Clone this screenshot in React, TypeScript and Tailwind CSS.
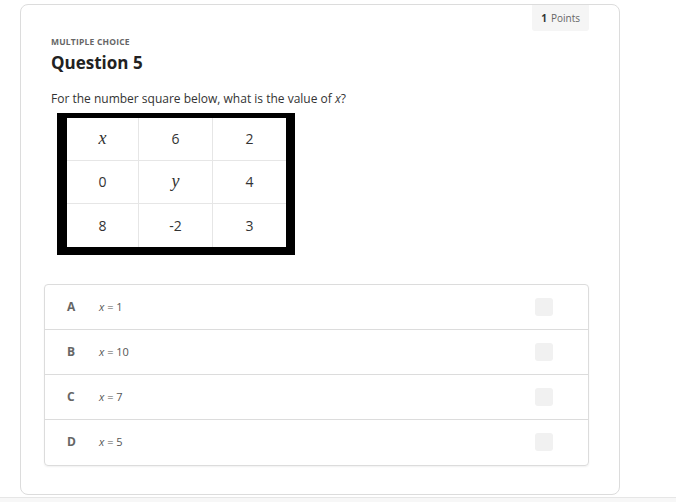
import React from "react";

const grid = [
  ["x", "6", "2"],
  ["0", "y", "4"],
  ["8", "-2", "3"],
];

const options = [
  { key: "A", value: "1" },
  { key: "B", value: "10" },
  { key: "C", value: "7" },
  { key: "D", value: "5" },
];

function NumberSquare() {
  return (
    <div className="mt-[6px] ml-[6px] w-[238px] bg-black pt-[5px] pb-[8px] pl-[10px] pr-[9px]">
      <div className="grid grid-cols-[72px_74px_73px] bg-white">
        {grid.flat().map((cell, i) => {
          const italic = cell === "x" || cell === "y";
          return (
            <div
              key={i}
              className={`flex h-[43px] items-center justify-center text-[14px] text-[#333] ${
                i % 3 !== 2 ? "border-r border-[#e6e6e6]" : ""
              } ${i < 6 ? "border-b border-[#e6e6e6]" : ""} ${
                italic ? "font-['Liberation_Serif',serif] italic text-[18px]" : ""
              }`}
            >
              {cell}
            </div>
          );
        })}
      </div>
    </div>
  );
}

export default function App() {
  return (
    <div className="h-[502px] w-[676px] bg-white font-['Open_Sans',sans-serif]">
      <div className="h-[497px] w-full bg-white pt-[4px] pl-[20px]">
        <div className="relative h-[491px] w-[600px] rounded-[8px] border border-[#dcdcdc] bg-white pl-[30px]">
          <div className="absolute right-[30px] top-0 flex h-[26px] items-center rounded-b-[3px] bg-[#f5f5f5] px-[9px] text-[10px] text-[#666]">
            <span className="mr-[4px] font-bold text-[#333]">1</span>Points
          </div>
          <div className="pt-[31px] text-[8.5px] font-bold tracking-[0.2px] text-[#666]">
            MULTIPLE CHOICE
          </div>
          <div className="mt-[2px] text-[17px] font-bold leading-[24px] text-[#222]">Question 5</div>
          <p className="mt-[16px] text-[12px] leading-[16px] text-[#333]">
            For the number square below, what is the value of <i>x</i>?
          </p>
          <NumberSquare />
          <div className="mt-[29px] -ml-[7px] w-[545px] overflow-hidden rounded-[4px] border border-[#dcdcdc] shadow-[0_1px_2px_rgba(0,0,0,0.06)]">
            {options.map((o, i) => (
              <div
                key={o.key}
                className={`flex h-[45px] items-center pl-[22px] pr-[35px] ${
                  i < 3 ? "border-b border-[#dcdcdc]" : ""
                }`}
              >
                <span className="w-[32px] text-[12px] font-bold text-[#666]">{o.key}</span>
                <span className="flex-1 text-[11px] text-[#555]">
                  <i>x</i> = {o.value}
                </span>
                <span className="h-[18px] w-[18px] rounded-[3px] bg-[#f1f1f1]" />
              </div>
            ))}
          </div>
        </div>
      </div>
      <div className="h-[5px] w-full border-t border-[#e6e6e6] bg-[#f7f7f7]" />
    </div>
  );
}
